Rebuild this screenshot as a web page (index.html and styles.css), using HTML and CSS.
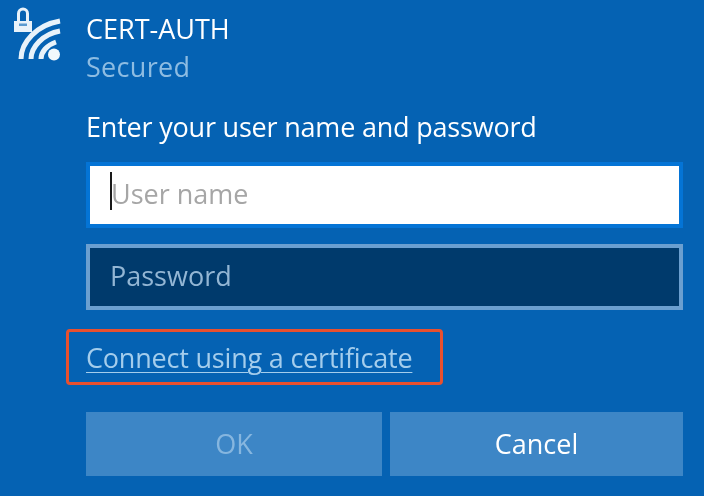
FILE: index.html
```html
<!DOCTYPE html>
<html lang="en">
<head>
<meta charset="utf-8">
<title>CERT-AUTH</title>
<link rel="stylesheet" href="styles.css">
</head>
<body>
<main class="panel">
  <header class="network">
    <svg class="wifi" width="72" height="66" viewBox="0 0 72 66" aria-hidden="true">
      <path class="lock-body" d="M14 21h18v11H14z"/>
      <path class="lock-slit" d="M19 23.500h8v2.500h-8z"/>
      <path class="lock-shackle" d="M18.500 21v-7.500a4.500 4.500 0 0 1 9 0V21"/>
      <path class="arc" d="M21 59C21 42 37 25 60 21"/>
      <path class="arc" d="M31 59C31 47 43 34 60 31"/>
      <path class="arc" d="M41 59C41 52 47 45 56 42"/>
      <circle class="dot" cx="54" cy="54.500" r="6"/>
    </svg>
    <div class="network-text">
      <div class="name">CERT-AUTH</div>
      <div class="status">Secured</div>
    </div>
  </header>
  <div class="form">
    <div class="prompt">Enter your user name and password</div>
    <div class="field field-active"><span class="caret"></span><span class="placeholder">User name</span></div>
    <div class="field field-dark"><span class="placeholder-dark">Password</span></div>
    <div class="link-wrap"><a class="link" href="#">Connect using a certificate</a></div>
    <div class="buttons">
      <div class="btn btn-off">OK</div>
      <div class="btn btn-on">Cancel</div>
    </div>
  </div>
</main>
</body>
</html>
```
FILE: styles.css
```css
html, body {
  margin: 0;
  height: 100%;
  background: #0562b3;
  overflow: hidden;
}
body {
  font-family: "Open Sans", "Noto Sans", sans-serif;
  font-size: 27px;
  color: #fff;
}
.panel {
  width: 704px;
  height: 496px;
  filter: blur(.5px);
}
.network {
  display: flex;
  height: 96px;
}
.wifi {
  width: 72px;
  height: 66px;
  margin: 0 14px 0 0;
  flex: none;
}
.lock-body { fill: #e8f2fa; }
.lock-slit { fill: #5a9ad0; }
.lock-shackle { fill: none; stroke: #e8f2fa; stroke-width: 3; }
.arc { fill: none; stroke: #e8f2fa; stroke-width: 5; }
.dot { fill: #f2f8fc; }
.network-text { padding-top: 10px; }
.name { height: 38px; line-height: 38px; letter-spacing: 0; }
.status { height: 38px; line-height: 38px; letter-spacing: .3px; color: #8dbce2; }
.form {
  margin: 0 21px 0 86px;
}
.prompt { height: 66px; line-height: 62px; letter-spacing: -.2px; }
.field {
  box-sizing: border-box;
  height: 66px;
  border: 4px solid;
  display: flex;
  align-items: center;
  padding: 0 0 4px 20px;
  margin-bottom: 16px;
}
.field-active { background: #fff; border-color: #0474d6; position: relative; padding-left: 21px; }
.field-dark { background: #003a6c; border-color: #6b9fd0; }
.caret {
  position: absolute;
  left: 20px;
  top: 6px;
  width: 2px;
  height: 38px;
  background: #1a1a1a;
}
.placeholder { color: #a6a6a6; }
.placeholder-dark { color: #93b6d4; }
.link-wrap {
  box-sizing: border-box;
  margin: 19px 0 27px -20px;
  width: 377px;
  height: 56px;
  border: 3px solid #e8502f;
  border-radius: 4px;
  padding-left: 17px;
  line-height: 51px;
  background: #0562b3;
}
.link {
  color: #a4cdec;
  text-decoration: underline;
  text-underline-offset: 4px;
  text-decoration-thickness: 1px;
  letter-spacing: -.2px;
}
.buttons {
  display: flex;
  gap: 8px;
}
.btn {
  height: 64px;
  line-height: 63px;
  text-align: center;
  background: #3d86c6;
}
.btn-off { width: 296px; color: #86b6df; }
.btn-on { width: 293px; color: #fff; }
```
